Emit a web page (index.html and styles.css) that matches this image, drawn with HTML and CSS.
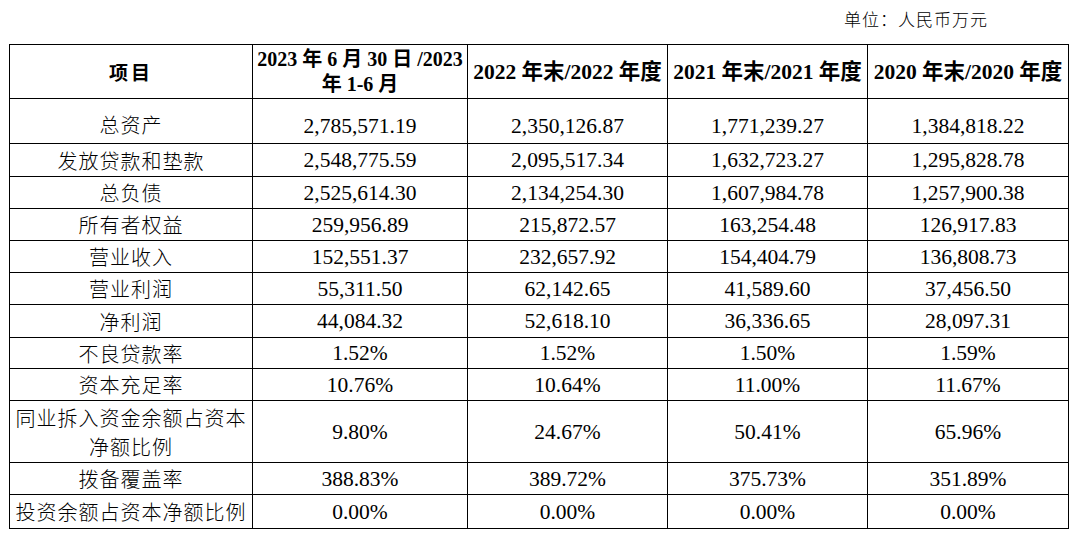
FILE: index.html
```html
<!DOCTYPE html>
<html lang="zh-CN">
<head>
<meta charset="utf-8">
<title>主要财务数据</title>
<link rel="stylesheet" href="styles.css">
</head>
<body>
<div class="page">
  <div class="unit">单位：人民币万元</div>
  <table class="fin">
    <colgroup>
      <col class="c-label">
      <col class="c-a">
      <col class="c-b">
      <col class="c-b">
      <col class="c-c">
    </colgroup>
    <thead>
      <tr class="r-head">
        <th class="h-item">项目</th>
        <th class="h-tight"><span class="nw">2023 年 6 月 30 日 /2023</span><br>年 1-6 月</th>
        <th>2022 年末/2022 年度</th>
        <th>2021 年末/2021 年度</th>
        <th>2020 年末/2020 年度</th>
      </tr>
    </thead>
    <tbody>
      <tr class="r-first"><td class="lbl">总资产</td><td>2,785,571.19</td><td>2,350,126.87</td><td>1,771,239.27</td><td>1,384,818.22</td></tr>
      <tr class="r33"><td class="lbl">发放贷款和垫款</td><td>2,548,775.59</td><td>2,095,517.34</td><td>1,632,723.27</td><td>1,295,828.78</td></tr>
      <tr class="r32"><td class="lbl">总负债</td><td>2,525,614.30</td><td>2,134,254.30</td><td>1,607,984.78</td><td>1,257,900.38</td></tr>
      <tr class="r32"><td class="lbl">所有者权益</td><td>259,956.89</td><td>215,872.57</td><td>163,254.48</td><td>126,917.83</td></tr>
      <tr class="r32"><td class="lbl">营业收入</td><td>152,551.37</td><td>232,657.92</td><td>154,404.79</td><td>136,808.73</td></tr>
      <tr class="r32"><td class="lbl">营业利润</td><td>55,311.50</td><td>62,142.65</td><td>41,589.60</td><td>37,456.50</td></tr>
      <tr class="r33"><td class="lbl">净利润</td><td>44,084.32</td><td>52,618.10</td><td>36,336.65</td><td>28,097.31</td></tr>
      <tr class="r31"><td class="lbl">不良贷款率</td><td>1.52%</td><td>1.52%</td><td>1.50%</td><td>1.59%</td></tr>
      <tr class="r32"><td class="lbl">资本充足率</td><td>10.76%</td><td>10.64%</td><td>11.00%</td><td>11.67%</td></tr>
      <tr class="r-tall"><td class="lbl"><div class="stack"><span class="nw">同业拆入资金余额占资本</span><span class="nw">净额比例</span></div></td><td>9.80%</td><td>24.67%</td><td>50.41%</td><td>65.96%</td></tr>
      <tr class="r32"><td class="lbl">拨备覆盖率</td><td>388.83%</td><td>389.72%</td><td>375.73%</td><td>351.89%</td></tr>
      <tr class="r-last"><td class="lbl">投资余额占资本净额比例</td><td>0.00%</td><td>0.00%</td><td>0.00%</td><td>0.00%</td></tr>
    </tbody>
  </table>
</div>
</body>
</html>
```
FILE: styles.css
```css
html, body {
  margin: 0;
  padding: 0;
  background: #fff;
}

.page {
  padding: 0 7px 0 9px;
  color: #000;
  font-family: "Liberation Serif", "Noto Sans CJK SC", serif;
}

.unit {
  padding: 8px 80px 0 0;
  height: 44px;
  box-sizing: border-box;
  line-height: 22px;
  text-align: right;
  font-size: 17px;
  letter-spacing: 1px;
  font-family: "Noto Sans CJK SC", sans-serif;
  font-weight: 300;
}

.fin {
  width: 1059px;
  border-collapse: collapse;
  table-layout: fixed;
  font-size: 21.5px;
}

.c-label { width: 243px; }
.c-a { width: 215px; }
.c-b { width: 200px; }
.c-c { width: 201px; }

.fin th,
.fin td {
  border: 1px solid #000;
  padding: 0 2px;
  text-align: center;
  vertical-align: middle;
  line-height: 26px;
}

.fin th {
  font-weight: bold;
  font-size: 21.5px;
}

.fin th.h-tight {
  font-size: 20px;
  line-height: 25px;
  padding: 0;
}

.nw {
  white-space: nowrap;
}

.stack {
  display: flex;
  flex-direction: column;
  align-items: center;
}

.fin th.h-item {
  font-family: "Noto Sans CJK SC", sans-serif;
  font-size: 19px;
  letter-spacing: 3px;
}

.fin td.lbl {
  font-family: "Noto Sans CJK SC", sans-serif;
  font-weight: 300;
  font-size: 20px;
  letter-spacing: 1px;
  line-height: 29px;
}

.r-head { height: 54px; }
.r-first { height: 45px; }
.r-first td {
  vertical-align: bottom;
  padding-bottom: 4px;
}
.r33 { height: 33px; }
.r32 { height: 32px; }
.r31 { height: 31px; }
.r-tall { height: 62px; }
.r-last { height: 34px; }
```
